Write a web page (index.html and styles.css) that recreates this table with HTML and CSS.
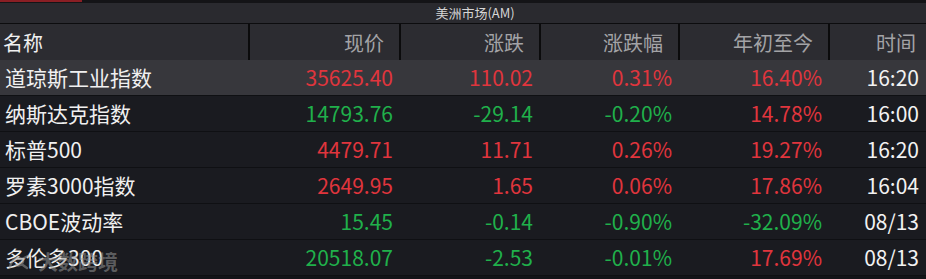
FILE: index.html
```html
<!DOCTYPE html>
<html lang="zh">
<head>
<meta charset="utf-8">
<link rel="stylesheet" href="styles.css">
</head>
<body>
<div class="app">
  <div class="tabstrip"><div class="tab-active"></div></div>
  <div class="titlebar">美洲市场(AM)</div>
  <div class="table">
    <div class="row head">
      <div class="c name">名称</div>
      <div class="c num">现价</div>
      <div class="c num">涨跌</div>
      <div class="c num">涨跌幅</div>
      <div class="c num">年初至今</div>
      <div class="c num last">时间</div>
    </div>
    <div class="row sel">
      <div class="c name">道琼斯工业指数</div>
      <div class="c num up">35625.40</div>
      <div class="c num up">110.02</div>
      <div class="c num up">0.31%</div>
      <div class="c num up">16.40%</div>
      <div class="c num time">16:20</div>
    </div>
    <div class="row">
      <div class="c name">纳斯达克指数</div>
      <div class="c num dn">14793.76</div>
      <div class="c num dn">-29.14</div>
      <div class="c num dn">-0.20%</div>
      <div class="c num up">14.78%</div>
      <div class="c num time">16:00</div>
    </div>
    <div class="row">
      <div class="c name">标普500</div>
      <div class="c num up">4479.71</div>
      <div class="c num up">11.71</div>
      <div class="c num up">0.26%</div>
      <div class="c num up">19.27%</div>
      <div class="c num time">16:20</div>
    </div>
    <div class="row">
      <div class="c name">罗素3000指数</div>
      <div class="c num up">2649.95</div>
      <div class="c num up">1.65</div>
      <div class="c num up">0.06%</div>
      <div class="c num up">17.86%</div>
      <div class="c num time">16:04</div>
    </div>
    <div class="row">
      <div class="c name">CBOE波动率</div>
      <div class="c num dn">15.45</div>
      <div class="c num dn">-0.14</div>
      <div class="c num dn">-0.90%</div>
      <div class="c num dn">-32.09%</div>
      <div class="c num time">08/13</div>
    </div>
    <div class="row">
      <div class="c name">多伦多300</div>
      <div class="c num dn">20518.07</div>
      <div class="c num dn">-2.53</div>
      <div class="c num dn">-0.01%</div>
      <div class="c num up">17.69%</div>
      <div class="c num time">08/13</div>
    </div>
  </div>
  <div class="watermark">
    <svg class="wm-logo" width="22" height="16" viewBox="0 0 22 16"><path d="M2 13 C4 4 10 2 14 5 C17 8 12 13 8 11 M14 5 L20 2 M12 9 L19 14" fill="none" stroke="currentColor" stroke-width="2.4" stroke-linecap="round"/></svg>
    <span>大数跨境</span>
  </div>
</div>
</body>
</html>
```

FILE: styles.css
```css
html, body {
  margin: 0;
  padding: 0;
  background: #131418;
}
.app {
  position: relative;
  width: 926px;
  height: 279px;
  overflow: hidden;
  font-family: "Noto Sans CJK SC", "Microsoft YaHei", sans-serif;
  background: #131418;
}
.tabstrip {
  height: 3px;
  background: #141417;
}
.tab-active {
  width: 82px;
  height: 2px;
  background: #8a1e24;
}
.titlebar {
  height: 20px;
  line-height: 20px;
  background: #2a2a2f;
  color: #d6d6d6;
  font-size: 13px;
  text-align: center;
  padding-left: 24px;
  border-bottom: 1px solid #0c0c0e;
}
.row {
  display: grid;
  grid-template-columns: 250px 151px 140px 139px 150px 96px;
  height: 35px;
  border-bottom: 1px solid #0f1013;
  background: #1a1b20;
  align-items: center;
  font-size: 21px;
}
.row.head {
  height: 36px;
  border-bottom: none;
  background: #2c2c31;
  color: #a3a3a6;
  align-items: stretch;
  font-size: 20px;
}
.row.head .c {
  display: flex;
  align-items: center;
  justify-content: flex-end;
  padding-right: 15px;
  border-right: 2px solid #0b0b0c;
}
.row.head .c.name {
  justify-content: flex-start;
  padding-left: 3px;
}
.row.head .c.last {
  border-right: none;
  padding-right: 10px;
}
.row.sel {
  background: #37373c;
}
.c {
  white-space: nowrap;
  line-height: 35px;
}
.c.name {
  color: #f0f0f0;
  padding-left: 5px;
}
.c.num {
  text-align: right;
  padding-right: 8px;
}
.c.time {
  color: #f2f2f2;
  padding-right: 7px;
}
.up { color: #e0353d; }
.dn { color: #20b04b; }
.watermark {
  position: absolute;
  left: 8px;
  top: 247px;
  display: flex;
  align-items: center;
  gap: 8px;
  color: rgba(150, 150, 150, 0.55);
  font-size: 20px;
  font-weight: bold;
}
.wm-logo {
  color: rgba(150, 150, 150, 0.55);
}
```
